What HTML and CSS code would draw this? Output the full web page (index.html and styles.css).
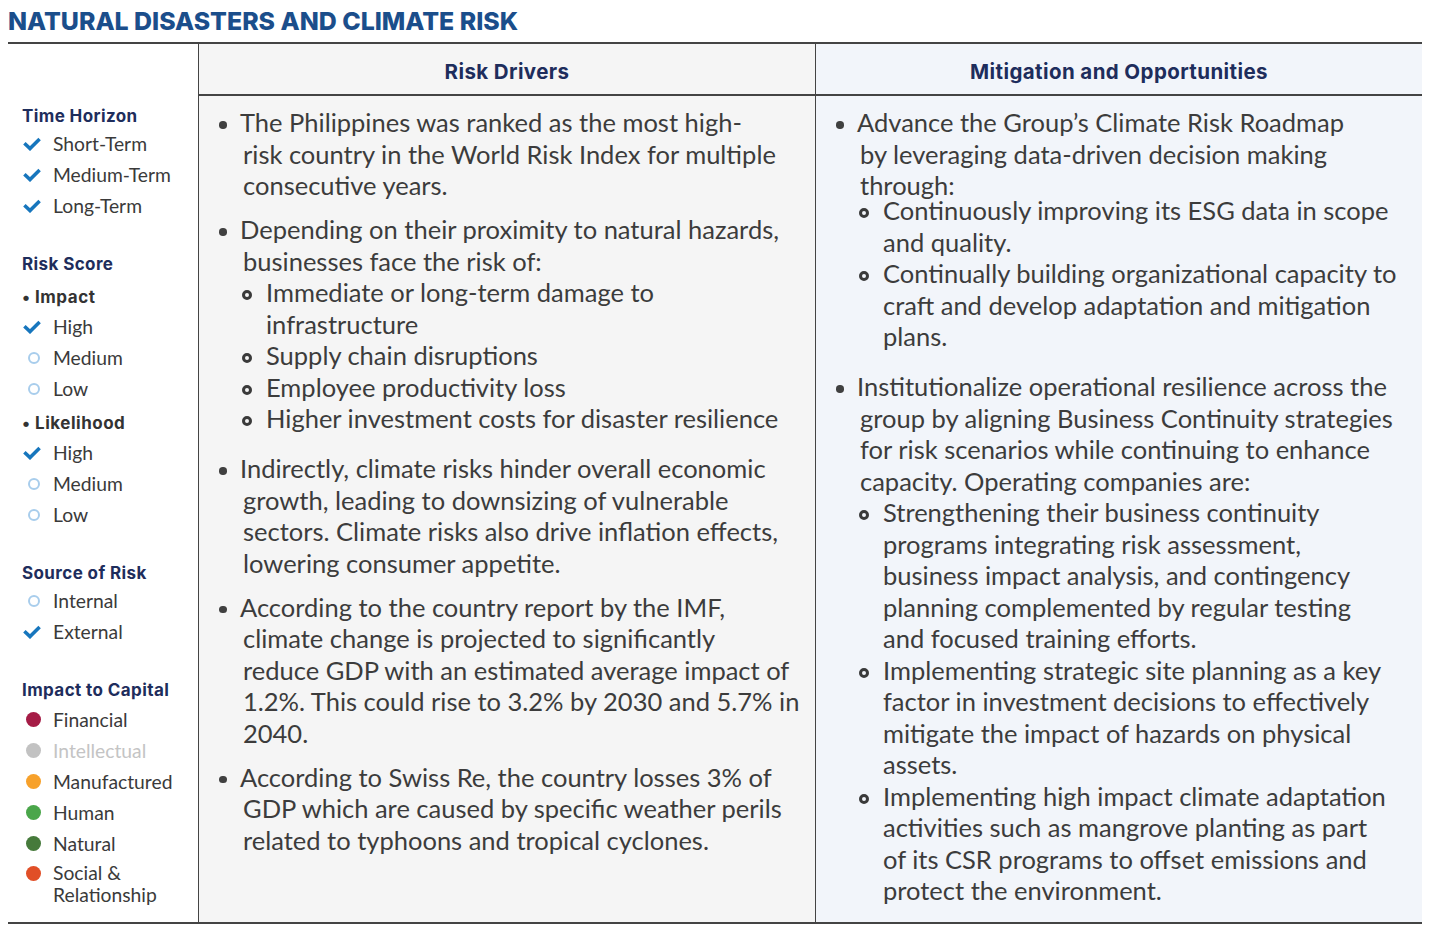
FILE: index.html
```html
<!DOCTYPE html>
<html lang="en">
<head>
<meta charset="utf-8">
<title>Natural Disasters and Climate Risk</title>
<link rel="stylesheet" href="styles.css">
</head>
<body>
<div class="page">
  <h1 class="title">NATURAL DISASTERS AND CLIMATE RISK</h1>
  <div class="table">
    <aside class="legend">
      <section class="lg-group">
        <h3 class="lg-title">Time Horizon</h3>
        <ul class="lg-list">
          <li class="lg-item"><span class="lg-icon"><svg class="check" viewBox="0 0 18 14"><path d="M1.4 6.2 L7 11.6 L16.6 2"/></svg></span>Short-Term</li>
          <li class="lg-item"><span class="lg-icon"><svg class="check" viewBox="0 0 18 14"><path d="M1.4 6.2 L7 11.6 L16.6 2"/></svg></span>Medium-Term</li>
          <li class="lg-item"><span class="lg-icon"><svg class="check" viewBox="0 0 18 14"><path d="M1.4 6.2 L7 11.6 L16.6 2"/></svg></span>Long-Term</li>
        </ul>
      </section>
      <section class="lg-group">
        <h3 class="lg-title">Risk Score</h3>
        <div class="lg-sub lg-sub-first">• Impact</div>
        <ul class="lg-list">
          <li class="lg-item"><span class="lg-icon"><svg class="check" viewBox="0 0 18 14"><path d="M1.4 6.2 L7 11.6 L16.6 2"/></svg></span>High</li>
          <li class="lg-item"><span class="lg-icon"><span class="ring-sm"></span></span>Medium</li>
          <li class="lg-item"><span class="lg-icon"><span class="ring-sm"></span></span>Low</li>
        </ul>
        <div class="lg-sub">• Likelihood</div>
        <ul class="lg-list">
          <li class="lg-item"><span class="lg-icon"><svg class="check" viewBox="0 0 18 14"><path d="M1.4 6.2 L7 11.6 L16.6 2"/></svg></span>High</li>
          <li class="lg-item"><span class="lg-icon"><span class="ring-sm"></span></span>Medium</li>
          <li class="lg-item"><span class="lg-icon"><span class="ring-sm"></span></span>Low</li>
        </ul>
      </section>
      <section class="lg-group">
        <h3 class="lg-title">Source of Risk</h3>
        <ul class="lg-list">
          <li class="lg-item"><span class="lg-icon"><span class="ring-sm"></span></span>Internal</li>
          <li class="lg-item"><span class="lg-icon"><svg class="check" viewBox="0 0 18 14"><path d="M1.4 6.2 L7 11.6 L16.6 2"/></svg></span>External</li>
        </ul>
      </section>
      <section class="lg-group">
        <h3 class="lg-title">Impact to Capital</h3>
        <ul class="lg-list lg-list-cap">
          <li class="lg-item"><span class="lg-icon"><span class="cap cap-financial"></span></span>Financial</li>
          <li class="lg-item lg-muted"><span class="lg-icon"><span class="cap cap-intellectual"></span></span>Intellectual</li>
          <li class="lg-item"><span class="lg-icon"><span class="cap cap-manufactured"></span></span>Manufactured</li>
          <li class="lg-item"><span class="lg-icon"><span class="cap cap-human"></span></span>Human</li>
          <li class="lg-item"><span class="lg-icon"><span class="cap cap-natural"></span></span>Natural</li>
          <li class="lg-item lg-multi"><span class="lg-icon"><span class="cap cap-social"></span></span><span>Social &amp;<br>Relationship</span></li>
        </ul>
      </section>
    </aside>

    <div class="th th-mid">Risk Drivers</div>
    <div class="th th-right">Mitigation and Opportunities</div>

    <div class="td td-mid">
      <ul class="bl">
        <li class="bi"><span class="dot"></span><div class="bt">The Philippines was ranked as the most high-<br>risk country in the World Risk Index for multiple<br>consecutive years.</div></li>
        <li class="bi"><span class="dot"></span><div class="bt">Depending on their proximity to natural hazards,<br>businesses face the risk of:
          <ul class="sl">
            <li class="si"><span class="ring"></span><div>Immediate or long-term damage to<br>infrastructure</div></li>
            <li class="si"><span class="ring"></span><div>Supply chain disruptions</div></li>
            <li class="si"><span class="ring"></span><div>Employee productivity loss</div></li>
            <li class="si"><span class="ring"></span><div>Higher investment costs for disaster resilience</div></li>
          </ul></div></li>
        <li class="bi"><span class="dot"></span><div class="bt">Indirectly, climate risks hinder overall economic<br>growth, leading to downsizing of vulnerable<br>sectors. Climate risks also drive inflation effects,<br>lowering consumer appetite.</div></li>
        <li class="bi"><span class="dot"></span><div class="bt">According to the country report by the IMF,<br>climate change is projected to significantly<br>reduce GDP with an estimated average impact of<br>1.2%. This could rise to 3.2% by 2030 and 5.7% in<br>2040.</div></li>
        <li class="bi"><span class="dot"></span><div class="bt">According to Swiss Re, the country losses 3% of<br>GDP which are caused by specific weather perils<br>related to typhoons and tropical cyclones.</div></li>
      </ul>
    </div>

    <div class="td td-right">
      <ul class="bl">
        <li class="bi"><span class="dot"></span><div class="bt">Advance the Group’s Climate Risk Roadmap<br>by leveraging data-driven decision making<br>through:
          <ul class="sl sl-tight">
            <li class="si"><span class="ring"></span><div>Continuously improving its ESG data in scope<br>and quality.</div></li>
            <li class="si"><span class="ring"></span><div>Continually building organizational capacity to<br>craft and develop adaptation and mitigation<br>plans.</div></li>
          </ul></div></li>
        <li class="bi"><span class="dot"></span><div class="bt">Institutionalize operational resilience across the<br>group by aligning Business Continuity strategies<br>for risk scenarios while continuing to enhance<br>capacity. Operating companies are:
          <ul class="sl">
            <li class="si"><span class="ring"></span><div>Strengthening their business continuity<br>programs integrating risk assessment,<br>business impact analysis, and contingency<br>planning complemented by regular testing<br>and focused training efforts.</div></li>
            <li class="si"><span class="ring"></span><div>Implementing strategic site planning as a key<br>factor in investment decisions to effectively<br>mitigate the impact of hazards on physical<br>assets.</div></li>
            <li class="si"><span class="ring"></span><div>Implementing high impact climate adaptation<br>activities such as mangrove planting as part<br>of its CSR programs to offset emissions and<br>protect the environment.</div></li>
          </ul></div></li>
      </ul>
    </div>
  </div>
</div>
</body>
</html>
```
FILE: styles.css
```css
* { box-sizing: border-box; }

body {
  margin: 0;
  background: #ffffff;
  font-family: Lato, "Open Sans", sans-serif;
  color: #3c3c3c;
}

.page { padding: 0 8px; }

.title {
  margin: 6px 0 6px;
  font: 800 24.9px/30px Inter, "Liberation Sans", sans-serif;
  color: #1b4e8b;
}

.table {
  display: grid;
  grid-template-columns: 191px 617px 1fr;
  grid-template-rows: 52px 1fr;
  height: 882px;
  border-top: 2px solid #444;
  border-bottom: 2px solid #444;
}

/* ---------- legend column ---------- */
.legend {
  grid-row: 1 / 3;
  grid-column: 1;
  border-right: 1px solid #444;
  padding: 57px 0 0 14px;
}

.lg-group + .lg-group { margin-top: 28.2px; }

.lg-title {
  margin: 0 0 -4px;
  font: 700 17px/31px Inter, sans-serif;
  letter-spacing: 0.4px;
  color: #1e2d5c;
}

.lg-sub {
  margin: 4.2px 0 -2.2px;
  font: 700 17px/31px Inter, sans-serif;
  letter-spacing: 0.5px;
  color: #333;
}
.lg-sub-first { margin-top: 6px; }

.lg-list { list-style: none; margin: 0; padding: 0; }
.lg-list-cap { margin-top: 1.5px; }

.lg-item {
  display: flex;
  align-items: center;
  height: 31px;
  font-size: 19.3px;
  color: #3a3a3a;
  white-space: nowrap;
}

.lg-muted { color: #c4c4c4; }

.lg-multi {
  height: auto;
  align-items: flex-start;
  line-height: 22px;
  padding-top: 3px;
}
.lg-multi .lg-icon { margin-top: 4px; }

.lg-icon {
  flex: 0 0 31px;
  display: flex;
  align-items: center;
}

.check {
  width: 18px;
  height: 14px;
  margin-left: 1px;
  fill: none;
  stroke: #1776bd;
  stroke-width: 3.5;
}

.ring-sm {
  width: 12px;
  height: 12px;
  margin-left: 6px;
  border: 2.3px solid #a8cdec;
  border-radius: 50%;
}

.cap {
  width: 15px;
  height: 15px;
  margin-left: 4px;
  border-radius: 50%;
}
.cap-financial { background: #a51c46; }
.cap-intellectual { background: #c2c2c2; }
.cap-manufactured { background: #f7a12b; }
.cap-human { background: #4aa64a; }
.cap-natural { background: #467a3b; }
.cap-social { background: #e14f27; }

/* ---------- header cells ---------- */
.th {
  display: flex;
  align-items: center;
  justify-content: center;
  padding-top: 4px;
  border-bottom: 2px solid #444;
  font: 700 20.5px Inter, sans-serif;
  letter-spacing: 0.4px;
  color: #1e2d5c;
}
.th-mid { background: #f5f5f5; border-right: 1px solid #444; }
.th-right { background: #f2f5fa; }

/* ---------- body cells ---------- */
.td { padding: 11px 0 0 20px; }
.td-mid { background: #f5f5f5; border-right: 1px solid #444; }
.td-right { background: #f2f5fa; }

.bl {
  list-style: none;
  margin: 0;
  padding: 0;
  font-size: 25.5px;
  line-height: 31.5px;
  white-space: nowrap;
}

.bi {
  display: grid;
  grid-template-columns: 24px 1fr;
}
.bi + .bi { margin-top: 12.5px; }

.dot {
  width: 7.5px;
  height: 7.5px;
  margin-top: 14px;
  border-radius: 50%;
  background: #404040;
}

.bt { text-indent: -3px; }

.sl {
  list-style: none;
  margin: 0 0 6px -1px;
  padding: 0;
  text-indent: 0;
}
.sl-tight { margin-top: -6.5px; }

.si {
  display: grid;
  grid-template-columns: 24px 1fr;
}

.ring {
  width: 10px;
  height: 10px;
  margin-top: 13px;
  border: 3px solid #3a3a3a;
  border-radius: 50%;
}
```
